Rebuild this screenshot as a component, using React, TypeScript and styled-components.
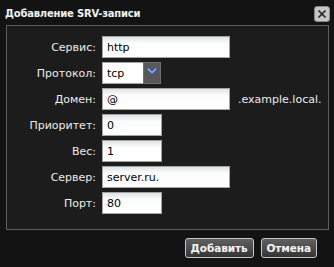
import React from "react";
import styled, { createGlobalStyle } from "styled-components";

const Global = createGlobalStyle`
  html, body { margin: 0; padding: 0; background: #121212; }
  body { font-family: "DejaVu Sans", Verdana, sans-serif; }
`;

const Window = styled.div`
  width: 334px;
  height: 267px;
  box-sizing: border-box;
  background: #131313;
  display: flex;
  flex-direction: column;
`;

const TitleBar = styled.div`
  height: 25px;
  padding: 0 4px 0 5px;
  display: flex;
  align-items: center;
  justify-content: space-between;
`;

const Title = styled.div`
  color: #f2f2f2;
  font-weight: bold;
  font-size: 10px;
  letter-spacing: -0.2px;
  margin-top: 1px;
`;

const CloseButton = styled.div`
  width: 14px;
  height: 14px;
  border-radius: 3px;
  background: #c6c6c6;
  border: 1px solid #8a8a8a;
  display: flex;
  align-items: center;
  justify-content: center;
  margin-top: 2px;
`;

const Panel = styled.div`
  margin: 0 5px 0 6px;
  border: 1px solid #5e5e5e;
  background: #1c1c1c;
  padding: 10px 0 15px;
  display: flex;
  flex-direction: column;
  gap: 4px;
`;

const Row = styled.div`
  display: flex;
  align-items: center;
  height: 22px;
`;

const Label = styled.div`
  width: 89px;
  text-align: right;
  color: #ececec;
  font-size: 11px;
  margin-right: 6px;
`;

const Input = styled.div<{ $w: number }>`
  width: ${(p) => p.$w}px;
  height: 22px;
  box-sizing: border-box;
  border: 1px solid #a4a4a4;
  background: linear-gradient(#dfe4e4 0, #fbfcfc 6px, #ffffff 100%);
  color: #000;
  font-size: 11px;
  display: flex;
  align-items: center;
  padding-left: 4px;
`;

const Suffix = styled.div`
  color: #ececec;
  font-size: 11px;
  margin-left: 8px;
`;

const Select = styled.div`
  display: flex;
  height: 22px;
`;

const SelectValue = styled.div`
  width: 41px;
  height: 22px;
  box-sizing: border-box;
  border: 1px solid #a4a4a4;
  border-right: none;
  background: #fff;
  color: #000;
  font-size: 11px;
  display: flex;
  align-items: center;
  padding-left: 4px;
`;

const SelectArrow = styled.div`
  width: 18px;
  height: 22px;
  box-sizing: border-box;
  background: #585858;
  border: 1px solid #6e6e6e;
  display: flex;
  align-items: flex-start;
  justify-content: center;
  padding-top: 4px;
`;

const Footer = styled.div`
  display: flex;
  justify-content: flex-end;
  gap: 7px;
  padding: 8px 17px 0 0;
`;

const Button = styled.div`
  height: 20px;
  box-sizing: border-box;
  padding: 0 5px;
  border: 1px solid #c8c8c8;
  border-radius: 3px;
  background: linear-gradient(#606060 0, #4a4a4a 55%, #333 100%);
  color: #f4f4f4;
  font-weight: bold;
  font-size: 10.5px;
  letter-spacing: -0.1px;
  display: flex;
  align-items: center;
`;

const rows: { label: string; value: string; w: number; suffix?: string }[] = [
  { label: "Домен:", value: "@", w: 128, suffix: ".example.local." },
  { label: "Приоритет:", value: "0", w: 60 },
  { label: "Вес:", value: "1", w: 60 },
  { label: "Сервер:", value: "server.ru.", w: 128 },
  { label: "Порт:", value: "80", w: 60 },
];

export default function App() {
  return (
    <>
      <Global />
      <Window>
        <TitleBar>
          <Title>Добавление SRV-записи</Title>
          <CloseButton>
            <svg width="10" height="10" viewBox="0 0 10 10">
              <path d="M1.5 1.5 L8.5 8.5 M8.5 1.5 L1.5 8.5" stroke="#222" strokeWidth="1.6" />
            </svg>
          </CloseButton>
        </TitleBar>
        <Panel>
          <Row>
            <Label>Сервис:</Label>
            <Input $w={128}>http</Input>
          </Row>
          <Row>
            <Label>Протокол:</Label>
            <Select>
              <SelectValue>tcp</SelectValue>
              <SelectArrow>
                <svg width="12" height="9" viewBox="0 0 12 9">
                  <path d="M1.5 1.5 L6 6 L10.5 1.5" fill="none" stroke="#3a5fc8" strokeWidth="3" />
                  <path d="M2 1.8 L6 5.6 L10 1.8" fill="none" stroke="#e8f0ff" strokeWidth="1" />
                </svg>
              </SelectArrow>
            </Select>
          </Row>
          {rows.map((r) => (
            <Row key={r.label}>
              <Label>{r.label}</Label>
              <Input $w={r.w}>{r.value}</Input>
              {r.suffix && <Suffix>{r.suffix}</Suffix>}
            </Row>
          ))}
        </Panel>
        <Footer>
          <Button>Добавить</Button>
          <Button>Отмена</Button>
        </Footer>
      </Window>
    </>
  );
}
